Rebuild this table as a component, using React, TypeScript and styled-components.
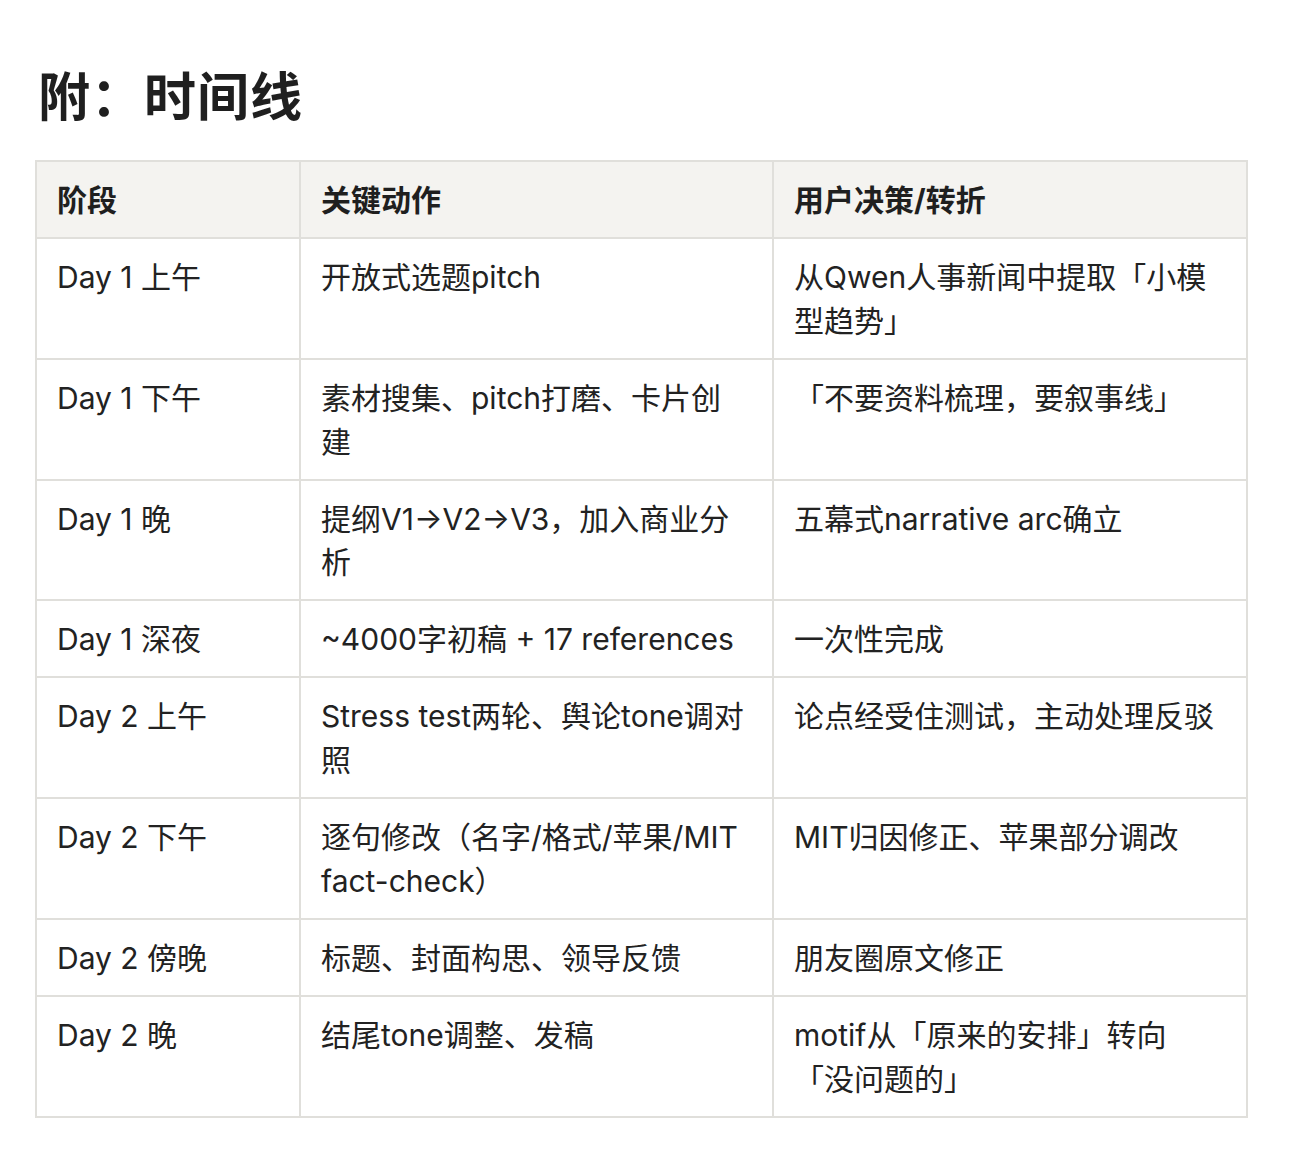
import React from "react";
import styled, { createGlobalStyle } from "styled-components";

const GlobalStyle = createGlobalStyle`
  body {
    margin: 0;
    background: #ffffff;
    color: #222222;
    font-family: Inter, "Noto Sans CJK SC", sans-serif;
  }
`;

type Row = {
  stage: string;
  action: string[];
  decision: string[];
};

const rows: Row[] = [
  { stage: "Day 1 上午", action: ["开放式选题pitch"], decision: ["从Qwen人事新闻中提取「小模", "型趋势」"] },
  { stage: "Day 1 下午", action: ["素材搜集、pitch打磨、卡片创", "建"], decision: ["「不要资料梳理，要叙事线」"] },
  { stage: "Day 1 晚", action: ["提纲V1→V2→V3，加入商业分", "析"], decision: ["五幕式narrative arc确立"] },
  { stage: "Day 1 深夜", action: ["~4000字初稿 + 17 references"], decision: ["一次性完成"] },
  { stage: "Day 2 上午", action: ["Stress test两轮、舆论tone调对", "照"], decision: ["论点经受住测试，主动处理反驳"] },
  { stage: "Day 2 下午", action: ["逐句修改（名字/格式/苹果/MIT", "fact-check）"], decision: ["MIT归因修正、苹果部分调改"] },
  { stage: "Day 2 傍晚", action: ["标题、封面构思、领导反馈"], decision: ["朋友圈原文修正"] },
  { stage: "Day 2 晚", action: ["结尾tone调整、发稿"], decision: ["motif从「原来的安排」转向", "「没问题的」"] },
];

const Page = styled.div`
  padding: 67px 48px 40px 35px;
`;

const Title = styled.h1`
  margin: 0 0 31px 3px;
  font-size: 52px;
  line-height: 62px;
  font-weight: 700;
  color: #1f1f1f;
  letter-spacing: 1px;
`;

const Table = styled.table`
  width: 1211px;
  border-collapse: collapse;
  table-layout: fixed;
  font-size: 30px;
  line-height: 43.9px;
`;

const HeadCell = styled.th`
  background: #f4f3f0;
  border: 2px solid #e0dfdb;
  padding: 17px 20px 14px;
  text-align: left;
  font-weight: 700;
  color: #1f1f1f;
  white-space: nowrap;
`;

const Cell = styled.td`
  border: 2px solid #e0dfdb;
  padding: 17px 20px 14px;
  vertical-align: top;
  white-space: nowrap;
  color: #222222;
`;

const Lines = ({ lines }: { lines: string[] }) => (
  <>
    {lines.map((line, i) => (
      <React.Fragment key={i}>
        {i > 0 && <br />}
        {line}
      </React.Fragment>
    ))}
  </>
);

const App = () => {
  return (
    <Page>
      <GlobalStyle />
      <Title>附：时间线</Title>
      <Table>
        <colgroup>
          <col style={{ width: 264 }} />
          <col style={{ width: 473 }} />
          <col style={{ width: 474 }} />
        </colgroup>
        <thead>
          <tr>
            <HeadCell>阶段</HeadCell>
            <HeadCell>关键动作</HeadCell>
            <HeadCell>用户决策/转折</HeadCell>
          </tr>
        </thead>
        <tbody>
          {rows.map((row) => (
            <tr key={row.stage}>
              <Cell>{row.stage}</Cell>
              <Cell>
                <Lines lines={row.action} />
              </Cell>
              <Cell>
                <Lines lines={row.decision} />
              </Cell>
            </tr>
          ))}
        </tbody>
      </Table>
    </Page>
  );
};

export default App;
